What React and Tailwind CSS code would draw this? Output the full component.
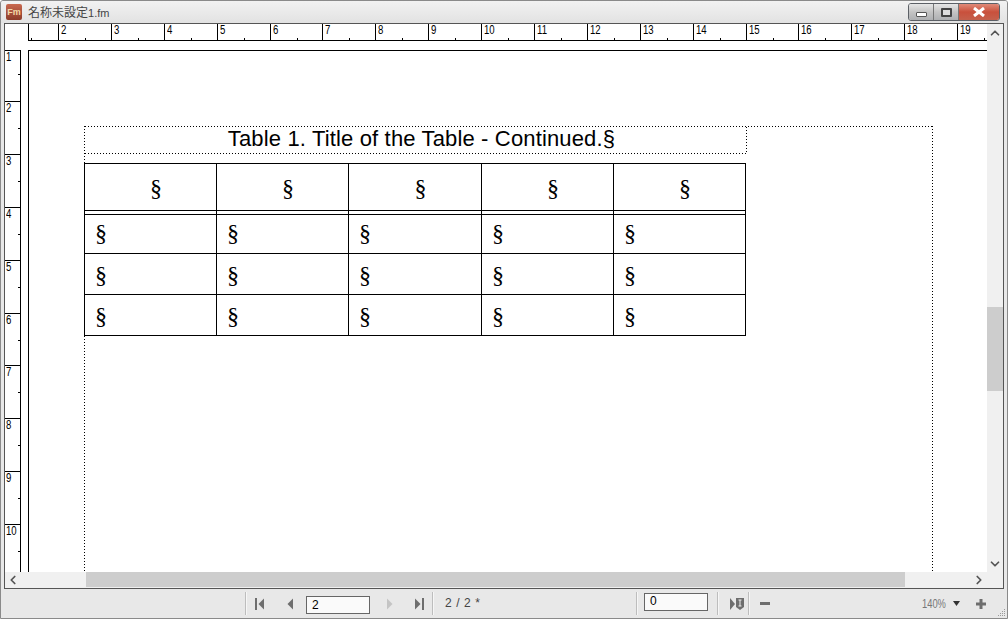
import React from "react";
import { ChevronLeft, ChevronRight, ChevronUp, ChevronDown } from "lucide-react";

const hTicks = [2, 3, 4, 5, 6, 7, 8, 9, 10, 11, 12, 13, 14, 15, 16, 17, 18, 19];
const vTicks = [2, 3, 4, 5, 6, 7, 8, 9, 10];
const columns = [0, 1, 2, 3, 4];

const dotsH = "h-px bg-[repeating-linear-gradient(90deg,#000_0,#000_1px,transparent_1px,transparent_3px)]";
const dotsV = "w-px bg-[repeating-linear-gradient(180deg,#000_0,#000_1px,transparent_1px,transparent_3px)]";
const rulerFont = "block origin-left scale-x-[0.8] font-['Liberation_Sans',sans-serif] text-[12px] leading-[11px] text-black";

// small arrows in the status bar
const Arrow = ({ dir = "right", bar = false, color = "#6e6e6e" }) => (
  <svg width="10" height="12" viewBox="0 0 10 12" fill={color}>
    {dir === "left" ? (
      <g>
        {bar && <rect x="0" y="0" width="2" height="12" />}
        <path d={bar ? "M9 0.5V11.5L3.5 6Z" : "M8 0.5V11.5L2.5 6Z"} />
      </g>
    ) : (
      <g>
        {bar && <rect x="8" y="0" width="2" height="12" />}
        <path d={bar ? "M1 0.5V11.5L6.5 6Z" : "M2 0.5V11.5L7.5 6Z"} />
      </g>
    )}
  </svg>
);

const Separator = () => <div className="w-[2px] h-[23px] bg-[#bdbdbd] border-r border-[#f6f6f6]" />;

const TitleBar = () => (
  <div className="h-[22px] flex items-center justify-between pl-[5px] pr-[7px] bg-gradient-to-b from-[#f2f2f2] to-[#e2e2e2]">
    <div className="flex items-center gap-[6px]">
      <div className="w-4 h-4 rounded-[2px] bg-gradient-to-b from-[#c9694f] to-[#8c3b2a] flex items-center justify-center text-[9px] font-bold leading-none text-[#f3d9a8] font-['Liberation_Sans',sans-serif]">
        Fm
      </div>
      <span className="text-[12px] leading-none text-[#444] font-['Noto_Sans_CJK_JP',sans-serif]">
        名称未設定<span className="text-[11px] font-['Liberation_Sans',sans-serif]">1.fm</span>
      </span>
    </div>
    <div className="flex h-[18px] w-[92px] rounded-[3px] border border-[#5c6066] overflow-hidden">
      <div className="w-[25px] flex items-end justify-center pb-[3px] border-r border-[#777] bg-gradient-to-b from-[#e6e6e6] via-[#c4c4c4] to-[#aeb0b2]">
        <div className="w-[11px] h-[5px] bg-white border border-[#555] rounded-[1px]" />
      </div>
      <div className="w-[25px] flex items-center justify-center border-r border-[#777] bg-gradient-to-b from-[#e6e6e6] via-[#c4c4c4] to-[#aeb0b2]">
        <div className="w-[11px] h-[9px] border-2 border-[#444] bg-[#ddd] rounded-[1px]" />
      </div>
      <div className="flex-1 flex items-center justify-center bg-gradient-to-b from-[#e08a78] via-[#c9503c] to-[#c4604c]">
        <svg width="14" height="10" viewBox="0 0 14 10">
          <path d="M2 1L12 9M12 1L2 9" stroke="#fff" strokeWidth="3" />
        </svg>
      </div>
    </div>
  </div>
);

const HorizontalRuler = () => (
  <div className="h-[17px] flex">
    <div className="w-[23px] shrink-0" />
    <div className="flex-1 flex overflow-hidden border-b border-black">
      <div className="relative w-[30px] shrink-0 border-l border-black">
        <div className="absolute left-[2px] bottom-0 w-px h-[2px] bg-black" />
      </div>
      {hTicks.map((n) => (
        <div key={n} className="relative w-[52.9px] shrink-0 border-l border-black pl-[2px] pt-[1px]">
          <span className={rulerFont}>{n}</span>
          <div className="absolute left-[26px] bottom-0 w-px h-[2px] bg-black" />
        </div>
      ))}
    </div>
  </div>
);

const VerticalRuler = () => (
  <div className="w-[16px] h-full shrink-0 border-r border-black overflow-hidden flex flex-col">
    <div className="relative h-[51px] shrink-0 border-t border-black pl-[1px] pt-[1px]">
      <span className={rulerFont}>1</span>
      <div className="absolute right-0 top-[23px] w-[2px] h-px bg-black" />
    </div>
    {vTicks.map((n) => (
      <div key={n} className="relative h-[52.9px] shrink-0 border-t border-black pl-[1px] pt-[1px]">
        <span className={rulerFont}>{n}</span>
        <div className="absolute right-0 top-[26px] w-[2px] h-px bg-black" />
      </div>
    ))}
  </div>
);

const TableGrid = () => {
  const sign = "font-['Liberation_Serif',serif] text-[24px] leading-none text-black";
  const rows = ["h-[39px] pb-[2px]", "h-[41px] pt-[1px]", "h-[41px] pt-[1px]"];
  return (
    <div className="-ml-px w-[662px] border-l border-t border-black bg-white grid grid-cols-[132px_132px_133px_132px_132px]">
      {columns.map((c) => (
        <div key={c} className="h-[51px] border-r border-b border-black flex flex-col">
          <div className="h-[47px] border-b border-black flex items-center justify-center pl-[11px] pt-[2px]">
            <span className={sign}>§</span>
          </div>
        </div>
      ))}
      {rows.map((h, r) =>
        columns.map((c) => (
          <div key={`${r}-${c}`} className={`${h} border-r border-b border-black flex items-center pl-[10px]`}>
            <span className={sign}>§</span>
          </div>
        ))
      )}
    </div>
  );
};

const Page = () => (
  <div className="flex-1 min-w-0 h-full overflow-hidden border-l border-t border-black bg-white pl-[55px] pt-[75px]">
    <div className="w-[849px] h-[600px] flex">
      <div className={`${dotsV} h-full shrink-0`} />
      <div className="w-[847px] flex flex-col">
        <div className={`${dotsH} w-full`} />
        <div className="w-[662px] h-[26px] flex">
          <div className="w-[661px] flex items-center justify-center pl-[12px] pb-[2px] font-['Liberation_Sans',sans-serif] text-[22px] tracking-[0.15px] leading-none text-black whitespace-nowrap">
            Table 1. Title of the Table - Continued.§
          </div>
          <div className={`${dotsV} h-full`} />
        </div>
        <div className={`${dotsH} w-[662px]`} />
        <div className="h-[9px]" />
        <TableGrid />
      </div>
      <div className={`${dotsV} h-full shrink-0`} />
    </div>
  </div>
);

const VerticalScroll = () => (
  <div className="w-[16px] shrink-0 bg-[#f0f0f0] flex flex-col">
    <div className="h-[283px] flex justify-center pt-[2px]">
      <ChevronUp size={14} strokeWidth={3} className="text-[#555]" />
    </div>
    <div className="h-[84px] bg-[#cdcdcd]" />
    <div className="flex-1 flex justify-center items-end pb-[1px]">
      <ChevronDown size={14} strokeWidth={3} className="text-[#555]" />
    </div>
  </div>
);

const HorizontalScroll = () => (
  <div className="h-[16px] shrink-0 flex bg-[#f0f0f0]">
    <div className="w-[81px] h-full flex items-center pl-[1px]">
      <ChevronLeft size={14} strokeWidth={3} className="text-[#555]" />
    </div>
    <div className="w-[819px] h-[15px] bg-[#cdcdcd]" />
    <div className="flex-1 h-full flex items-center justify-end pr-[17px]">
      <ChevronRight size={14} strokeWidth={3} className="text-[#555]" />
    </div>
  </div>
);

const StatusBar = () => (
  <div className="relative h-[29px] flex items-center bg-[#e8e8e8] text-[12px] leading-none text-[#444] font-['Liberation_Sans',sans-serif]">
    <div className="w-[244px]" />
    <Separator />
    <div className="w-[8px]" />
    <Arrow dir="left" bar />
    <div className="w-[20px]" />
    <Arrow dir="left" />
    <div className="w-[11px]" />
    <div className="w-[64px] h-[18px] mt-[3px] border border-[#666] bg-[#fafafa] pl-[5px] pt-[2px] text-black">2</div>
    <div className="w-[15px]" />
    <Arrow dir="right" color="#c4c4c4" />
    <div className="w-[19px]" />
    <Arrow dir="right" bar />
    <div className="w-[8px]" />
    <Separator />
    <div className="w-[11px]" />
    <span className="w-[191px] mb-[2px] tracking-[0.6px]">2 / 2 *</span>
    <Separator />
    <div className="w-[6px]" />
    <div className="w-[64px] h-[18px] mb-[3px] border border-[#666] bg-[#fafafa] pl-[5px] pt-[1px] text-black">0</div>
    <div className="w-[9px]" />
    <Separator />
    <div className="w-[11px]" />
    <svg width="14" height="14" viewBox="0 0 14 14" fill="#6e6e6e">
      <path d="M0 1V13L5 7Z" />
      <path d="M6 1H14V10L10 13L6 10Z" />
      <path d="M8.5 3H11.5M10 3V9M8.5 9H11.5" stroke="#eee" fill="none" />
    </svg>
    <div className="w-[4px]" />
    <Separator />
    <div className="w-[10px]" />
    <div className="w-[10px] h-[3px] bg-[#6e6e6e]" />
    <div className="w-[152px]" />
    <span className="w-[30px] origin-left scale-x-[0.78] text-[#777] whitespace-nowrap">140%</span>
    <svg width="7" height="5" viewBox="0 0 7 5" className="ml-[1px]" fill="#333">
      <path d="M0 0H7L3.5 5Z" />
    </svg>
    <div className="w-[16px]" />
    <svg width="10" height="10" viewBox="0 0 10 10" fill="#6e6e6e">
      <path d="M3.5 0H6.5V3.5H10V6.5H6.5V10H3.5V6.5H0V3.5H3.5Z" />
    </svg>
    {/* resize grip */}
    <svg width="8" height="8" viewBox="0 0 8 8" fill="#9a9a9a" className="absolute right-[1px] bottom-[1px]">
      <path d="M6 0h1v1H6zM4 2h1v1H4zM6 2h1v1H6zM2 4h1v1H2zM4 4h1v1H4zM6 4h1v1H6zM0 6h1v1H0zM2 6h1v1H2zM4 6h1v1H4zM6 6h1v1H6z" />
    </svg>
  </div>
);

export default function App() {
  return (
    <div className="w-[1008px] h-[619px] border border-[#8a8a8a] rounded-t-[3px] bg-[#e8e8e8] flex flex-col overflow-hidden">
      <TitleBar />
      <div className="h-[566px] mx-[3px] border border-[#555] bg-white flex flex-col">
        <div className="flex-1 min-h-0 flex">
          <div className="flex-1 min-w-0 flex flex-col">
            <HorizontalRuler />
            <div className="h-[9px]" />
            <div className="h-[522px] flex">
              <VerticalRuler />
              <div className="w-[7px] shrink-0" />
              <Page />
            </div>
          </div>
          <VerticalScroll />
        </div>
        <HorizontalScroll />
      </div>
      <StatusBar />
    </div>
  );
}
